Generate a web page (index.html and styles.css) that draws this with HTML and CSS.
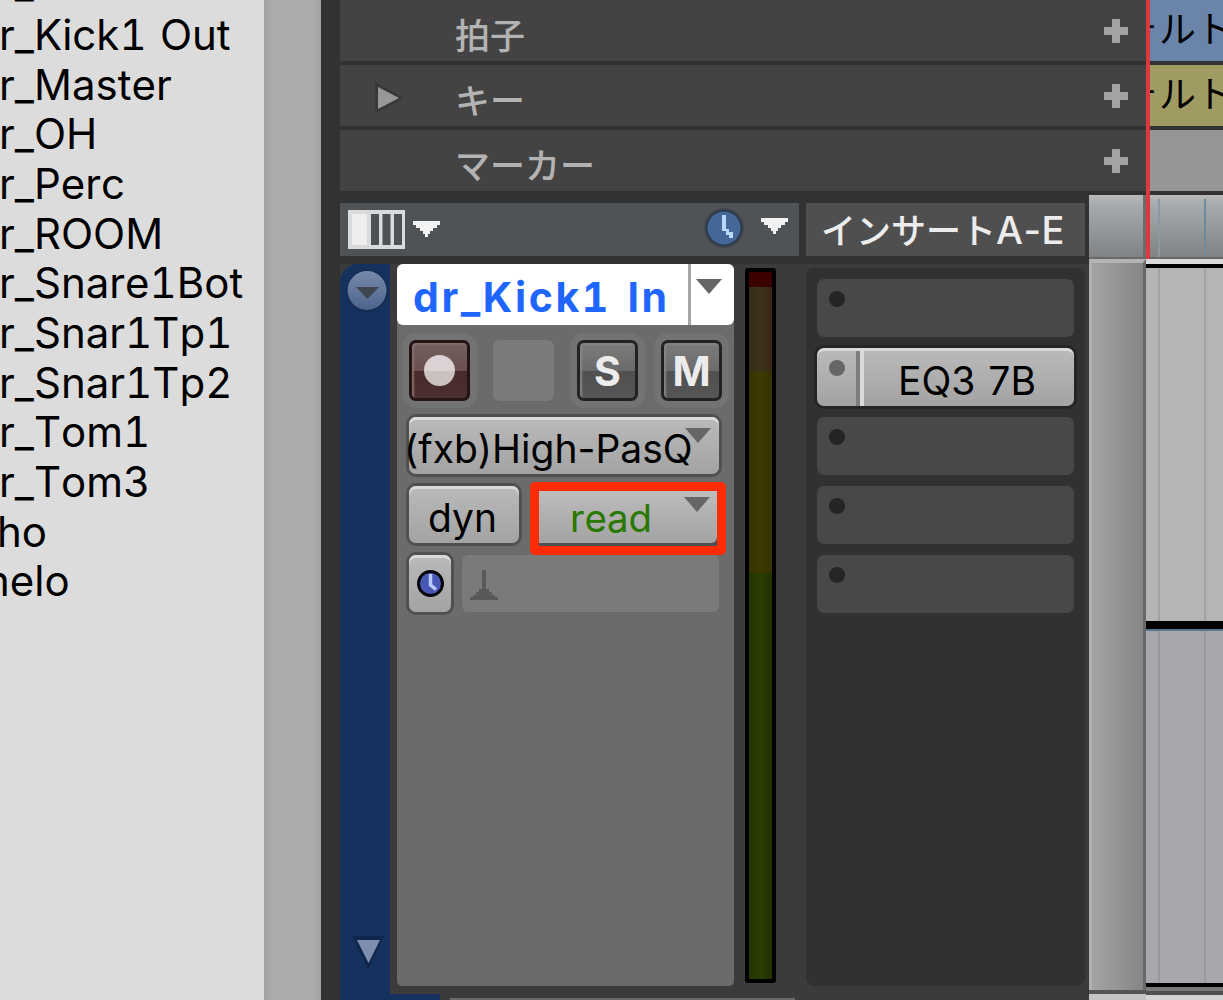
FILE: index.html
```html
<!DOCTYPE html>
<html lang="ja">
<head>
  <meta charset="UTF-8" />
  <title>Edit Window</title>
  <link rel="stylesheet" href="styles.css">
</head>
<body>
  <div class="app">
    <!-- Track list -->
    <ul class="track-list">
      <li>r_</li>
      <li>r_Kick1 Out</li>
      <li>r_Master</li>
      <li>r_OH</li>
      <li>r_Perc</li>
      <li>r_ROOM</li>
      <li>r_Snare1Bot</li>
      <li>r_Snar1Tp1</li>
      <li>r_Snar1Tp2</li>
      <li>r_Tom1</li>
      <li>r_Tom3</li>
      <li class="cut-h">ho</li>
      <li class="cut-m">melo</li>
    </ul>
    <div class="scrollbar"></div>

    <div class="main">
      <!-- Ruler rows -->
      <div class="ruler-row">
        <div class="ruler-name"><span>拍子</span><i class="plus"></i></div>
        <div class="ruler-lane meter-lane"><span>ォルト</span></div>
      </div>
      <div class="ruler-row">
        <div class="ruler-name">
          <svg class="expand" width="32" height="34" viewBox="0 0 32 34">
            <path d="M2 1v32L31 17z" fill="#383838"/>
            <path d="M5 6v22L26 17z" fill="#979797"/>
          </svg>
          <span>キー</span><i class="plus"></i>
        </div>
        <div class="ruler-lane key-lane"><span>ォルト</span></div>
      </div>
      <div class="ruler-row">
        <div class="ruler-name"><span>マーカー</span><i class="plus"></i></div>
        <div class="ruler-lane"></div>
      </div>

      <div class="edit">
        <div class="tracks">
          <div class="column-heads">
            <div class="view-bar">
              <svg width="94" height="40" viewBox="0 0 94 40">
                <path d="M1 0h57v39H1z" fill="#d9dadb"/>
                <path d="M5 4h15v31H5z" fill="#eeeeee"/>
                <path d="M24 4h8v31h-8zM35.500 4h8v31h-8zM47 4h8v31h-8z" fill="#4f5254"/>
                <path d="M66 11h27v4h-3v3h-4v3h-3v3h-2v3h-3v-3h-2v-3h-3v-3h-4v-3h-3z" fill="#f2f2f2"/>
              </svg>
              <svg width="86" height="44" viewBox="0 0 86 44">
                <circle cx="22" cy="22" r="20" fill="#42484e"/>
                <circle cx="22" cy="22" r="18.500" fill="#2c394a"/>
                <circle cx="22" cy="22" r="16.500" fill="#456798"/>
                <path d="M20 9h4v14h3v3h4v6h-4v-3h-3v-4h-4z" fill="#b9d7f6"/>
                <path d="M59 12h27v4h-3v3h-4v3h-3v3h-2v3h-3v-3h-2v-3h-3v-3h-4v-3h-3z" fill="#f2f2f2"/>
              </svg>
            </div>
            <div class="inserts-head">インサート<span>A-E</span></div>
          </div>

          <div class="track">
            <div class="color-strip">
              <svg width="42" height="42" viewBox="0 0 42 42">
                <defs>
                  <linearGradient id="knob" x1="0" y1="0" x2="0" y2="1">
                    <stop offset="0" stop-color="#788aab"/>
                    <stop offset="1" stop-color="#4c638d"/>
                  </linearGradient>
                </defs>
                <circle cx="21" cy="21" r="21" fill="#152b4f"/>
                <circle cx="21" cy="20.500" r="19.500" fill="url(#knob)"/>
                <path d="M10 17h23L21.500 29z" fill="#3e454e"/>
              </svg>
              <svg width="32" height="34" viewBox="0 0 32 34">
                <path d="M0 0h32L16 33z" fill="#10274c"/>
                <path d="M5 4h23L16.500 27z" fill="#7d8eae"/>
              </svg>
            </div>

            <div class="controls">
              <div class="track-name">
                <span>dr_Kick1 In</span>
                <div class="name-menu"><i class="arrow"></i></div>
              </div>
              <div class="buttons">
                <div class="btn rec"><i></i></div>
                <div class="btn blank"></div>
                <div class="btn">S</div>
                <div class="btn">M</div>
              </div>
              <div class="selector view"><span>(fxb)High-PasQ</span><i class="arrow"></i></div>
              <div class="automation">
                <div class="selector dyn"><span>dyn</span></div>
                <div class="highlight"><div class="mode"><span>read</span><i class="arrow"></i></div></div>
              </div>
              <div class="timebase">
                <div class="selector clock">
                  <svg width="27" height="27" viewBox="0 0 27 27">
                    <circle cx="13.500" cy="13.500" r="12" fill="#4858b4" stroke="#05050b" stroke-width="3"/>
                    <path d="M13.500 4v11l5.500 4.500" fill="none" stroke="#bccbff" stroke-width="3.500"/>
                  </svg>
                </div>
                <div class="playlist">
                  <svg width="28" height="30" viewBox="0 0 28 30">
                    <path d="M12 0h4v19h3v3h3v3h3v2h3v4H0v-4h3v-2h3v-3h3v-3h3z" fill="#595959"/>
                  </svg>
                </div>
              </div>
            </div>

            <div class="meter">
              <div class="clip"></div>
              <div class="hot"></div>
              <div class="mid"></div>
              <div class="low"></div>
            </div>

            <div class="inserts">
              <div class="slot"><i></i></div>
              <div class="slot filled"><i></i><span>EQ3 7B</span></div>
              <div class="slot"><i></i></div>
              <div class="slot"><i></i></div>
              <div class="slot"><i></i></div>
            </div>
          </div>

          <div class="next-track">
            <div class="next-color"></div>
            <div class="next-controls"></div>
          </div>
        </div>

        <div class="track-ruler">
          <div class="ruler-cap"></div>
          <div class="ruler-body"></div>
          <div class="ruler-next"></div>
        </div>

        <div class="timeline">
          <div class="timeline-ruler"></div>
          <div class="lane-edge"></div>
          <div class="lane"></div>
          <div class="lane-split"></div>
          <div class="lane automation-lane"></div>
          <div class="lane-end"></div>
        </div>
      </div>
      <div class="playhead"></div>
    </div>
  </div>
</body>
</html>
```
FILE: styles.css
```css
* { box-sizing: border-box; }
body {
  margin: 0;
  height: 1000px;
  overflow: hidden;
  font-family: Inter, "Noto Sans CJK JP", sans-serif;
  font-kerning: none;
  background: #323232;
  color: #000;
}
.app {
  display: flex;
  width: 1223px;
  height: 1000px;
  overflow: hidden;
}

/* track list */
.track-list {
  width: 264px;
  height: 1000px;
  margin: 0;
  padding: 0;
  overflow: hidden;
  list-style: none;
  background: #dcdcdc;
  font-size: 42px;
  font-variant-numeric: tabular-nums;
  line-height: 49.67px;
  white-space: nowrap;
}
.track-list li {
  height: 49.67px;
  margin-left: -1px;
  word-spacing: 2px;
}
.track-list li:first-child {
  height: 52.67px;
  margin-top: -42.500px;
}
.track-list .cut-h { margin-left: -3px; }
.track-list .cut-m { margin-left: -27px; }
.scrollbar {
  width: 57px;
  background: linear-gradient(90deg, #a0a0a0, #ababab 8px, #ababab 48px, #a2a2a2);
}

.main {
  position: relative;
  width: 902px;
  padding-left: 19px;
}

/* ruler rows */
.ruler-row {
  display: flex;
  height: 61px;
  margin-bottom: 4px;
}
.ruler-name {
  position: relative;
  display: flex;
  justify-content: space-between;
  align-items: center;
  width: 806px;
  padding: 0 18px 0 115px;
  background: #434343;
  color: #b3b3b3;
  font-size: 35px;
  font-weight: 500;
}
.ruler-name span {
  padding-top: 5px;
}
.expand {
  position: absolute;
  left: 33px;
  top: 16px;
}
.plus {
  width: 24px;
  height: 24px;
  background:
    linear-gradient(#a3a3a3, #a3a3a3) center / 8px 24px no-repeat,
    linear-gradient(#a3a3a3, #a3a3a3) center / 24px 8px no-repeat;
}
.ruler-lane {
  flex: 1;
  overflow: hidden;
  background: #969696;
  font-size: 37px;
  line-height: 60px;
  white-space: nowrap;
}
.ruler-lane span {
  margin-left: -24px;
}
.meter-lane { background: #6b85aa; }
.key-lane { background: #a09a63; }

.edit {
  display: flex;
  height: 805px;
}
.tracks {
  width: 749px;
  padding-top: 8px;
}
.column-heads {
  display: flex;
  gap: 7px;
  height: 53px;
}
.view-bar {
  display: flex;
  justify-content: space-between;
  align-items: flex-start;
  width: 459px;
  padding: 7px 11px 0 7px;
  background: #4f5356;
}
.view-bar svg + svg {
  margin-top: -4px;
}
.inserts-head {
  width: 279px;
  padding-left: 15px;
  background: #4f4f4f;
  color: #ececec;
  font-size: 35px;
  font-weight: 500;
  line-height: 55px;
  white-space: nowrap;
}
.inserts-head span {
  font-size: 38px;
  letter-spacing: 0.5px;
}

/* track */
.track {
  display: flex;
  height: 730px;
  margin-top: 8px;
  background: #3b3b3b;
}
.color-strip {
  display: flex;
  flex-direction: column;
  justify-content: space-between;
  width: 50px;
  padding: 6px 6px 24px;
  border-top-left-radius: 18px;
  background: #15325f;
}
.color-strip svg + svg {
  margin-left: 6px;
}
.controls {
  width: 337px;
  height: 722px;
  margin-left: 7px;
  border-radius: 5px;
  background: #6b6b6b;
}
.track-name {
  display: flex;
  height: 61px;
  border-radius: 6px;
  background: #fff;
  color: #1e66ff;
  font-size: 41px;
  font-weight: 700;
  font-variant-numeric: tabular-nums;
  line-height: 66px;
  letter-spacing: 2.6px;
  word-spacing: 3px;
  white-space: nowrap;
}
.track-name span {
  width: 291px;
  padding-left: 16px;
}
.name-menu {
  width: 45px;
  padding: 15px 0 0 5px;
  border-left: 3px solid #a6a6a6;
}
.arrow {
  display: block;
  width: 26px;
  height: 15px;
  background: #666;
  clip-path: polygon(0 0, 100% 0, 50% 100%);
}
.buttons {
  display: flex;
  gap: 23px;
  padding: 15px 12px 0;
}
.btn {
  display: flex;
  justify-content: center;
  align-items: center;
  width: 61px;
  height: 61px;
  border: 3px solid #222;
  border-radius: 7px;
  background: linear-gradient(#7b7b7b, #6b6b6b 50%, #505050 50%, #555);
  box-shadow: 0 0 0 7px #737373, inset 2px 2px 2px #858585;
  color: #ececec;
  font-size: 41px;
  font-weight: 700;
}
.rec {
  border-color: #241414;
  background: linear-gradient(#735f5f, #6b5050 50%, #482a2a 50%, #4b2e2e);
  box-shadow: 0 0 0 7px #737373, inset 2px 2px 2px #876d6d;
}
.rec i {
  width: 31px;
  height: 31px;
  border-radius: 50%;
  background: linear-gradient(#dbd3d3 50%, #cbc1c1 50%);
}
.btn.blank {
  border: none;
  background: #7b7b7b;
  box-shadow: none;
}
.selector {
  border-radius: 7px;
  background: linear-gradient(#bababa, #a3a3a3);
  box-shadow: 0 0 0 3px #505050, inset 0 3px 0 #dadada;
}
.selector span {
  font-size: 39px;
  white-space: nowrap;
}
.view {
  display: flex;
  width: 310px;
  height: 57px;
  margin: 16px 0 0 12px;
  line-height: 63px;
}
.view span {
  width: 278px;
  margin-left: -5px;
}
.view .arrow {
  margin: 11px 0 0 3px;
}
.automation {
  display: flex;
  height: 57px;
  margin: 12px 0 0 12px;
}
.dyn {
  width: 110px;
  padding-right: 3px;
  line-height: 64px;
  text-align: center;
}
.highlight {
  width: 196px;
  height: 73px;
  margin: -4px 0 0 11px;
  border: 9px solid #ff2b06;
  border-radius: 5px;
  background: #505050;
}
.mode {
  display: flex;
  justify-content: space-between;
  height: 52px;
  padding: 0 7px 0 31px;
  border-radius: 0 0 6px 0;
  background: linear-gradient(#bcbcbc, #a3a3a3);
}
.mode span {
  color: #297800;
  font-size: 38.500px;
  line-height: 54px;
}
.mode .arrow {
  margin-top: 6px;
}
.timebase {
  display: flex;
  gap: 11px;
  height: 57px;
  margin: 12px 0 0 12px;
}
.clock {
  display: flex;
  justify-content: center;
  align-items: center;
  width: 42px;
}
.playlist {
  width: 257px;
  padding: 15px 0 0 8px;
  border-radius: 6px;
  background: #7a7a7a;
}

/* level meter */
.meter {
  width: 31px;
  height: 715px;
  margin: 4px 0 0 11px;
  padding: 4px;
  border-radius: 3px;
  background: #000;
}
.clip { height: 15px; background: #3b0000; }
.hot { height: 85px; background: linear-gradient(90deg, #362e19, #3b3219 50%, #3b2616); }
.mid { height: 201px; background: linear-gradient(90deg, #373300, #3e3a00 50%, #353200); }
.low { height: 406px; background: linear-gradient(90deg, #243300, #2b3e00 50%, #203000); }

/* inserts */
.inserts {
  display: flex;
  flex-direction: column;
  gap: 11px;
  width: 279px;
  height: 718px;
  margin: 4px 0 0 30px;
  padding: 11px;
  border-radius: 8px;
  background: #313131;
}
.slot {
  position: relative;
  width: 257px;
  height: 58px;
  padding: 12px 0 0 12px;
  border-radius: 7px;
  background: #484848;
}
.slot i {
  display: block;
  width: 16px;
  height: 16px;
  border-radius: 50%;
  background: #252525;
}
.filled {
  display: flex;
  background:
    linear-gradient(90deg, #7d7d7d 50%, #dadada 50%) 39px 0 / 8px 58px no-repeat,
    linear-gradient(#bababa, #a3a3a3);
  box-shadow: 0 0 0 3px #252525, inset 0 3px 0 #dadada;
}
.filled i { background: #666; }
.filled span {
  margin: -10px 0 0 53px;
  font-size: 39px;
  line-height: 62px;
  word-spacing: 2px;
  white-space: nowrap;
}

.next-track {
  display: flex;
  gap: 10px;
  height: 6px;
  background: #3b3b3b;
}
.next-color { width: 100px; background: #15325f; }
.next-controls { width: 345px; margin-top: 4px; background: #6b6b6b; }

/* timeline */
.track-ruler {
  width: 57px;
}
.ruler-cap {
  height: 64px;
  border-right: 3px solid #696b6d;
  border-bottom: 2px solid #696969;
  background: linear-gradient(#bababa, #a9acae 8px, #808284);
}
.ruler-body {
  height: 731px;
  border-top: 4px solid #b4b4b4;
  border-right: 3px solid #686868;
  border-left: 3px solid #b0b0b0;
  background: linear-gradient(90deg, #a4a4a4, #858585);
}
.ruler-next {
  height: 10px;
  border-top: 4px solid #555;
  background: #c4c4c4;
}
.timeline {
  flex: 1;
}
.timeline-ruler {
  height: 64px;
  border-bottom: 2px solid #696969;
  background:
    linear-gradient(#8a9aa5, #8a9aa5) 12px 4px / 2px 60px no-repeat,
    linear-gradient(#6d8ba0, #6d8ba0) 58px 4px / 2px 60px no-repeat,
    linear-gradient(#bababa, #a9acae 8px, #808284);
}
.lane-edge {
  height: 9px;
  border-top: 5px solid #dadada;
  background: #000;
}
.lane {
  height: 353px;
  background:
    linear-gradient(#a3a3a3, #a3a3a3) 12px 0 / 2px 100% no-repeat,
    linear-gradient(#a3a3a3, #a3a3a3) 58px 0 / 2px 100% no-repeat,
    #b5b5b5;
}
.lane-split {
  height: 10px;
  border-bottom: 2px solid #55798e;
  background: #000;
}
.automation-lane {
  height: 352px;
  background:
    linear-gradient(#97999e, #97999e) 12px 0 / 2px 100% no-repeat,
    linear-gradient(#97999e, #97999e) 58px 0 / 2px 100% no-repeat,
    #a6a8ad;
}
.lane-end {
  height: 17px;
  border-top: 4px solid #000;
  background: linear-gradient(#77797d 4px, #505050 4px, #505050 8px, #d3d3d3 8px);
}
.playhead {
  position: absolute;
  left: 825px;
  top: 0;
  width: 4px;
  height: 259px;
  background: #dc393e;
}
```
